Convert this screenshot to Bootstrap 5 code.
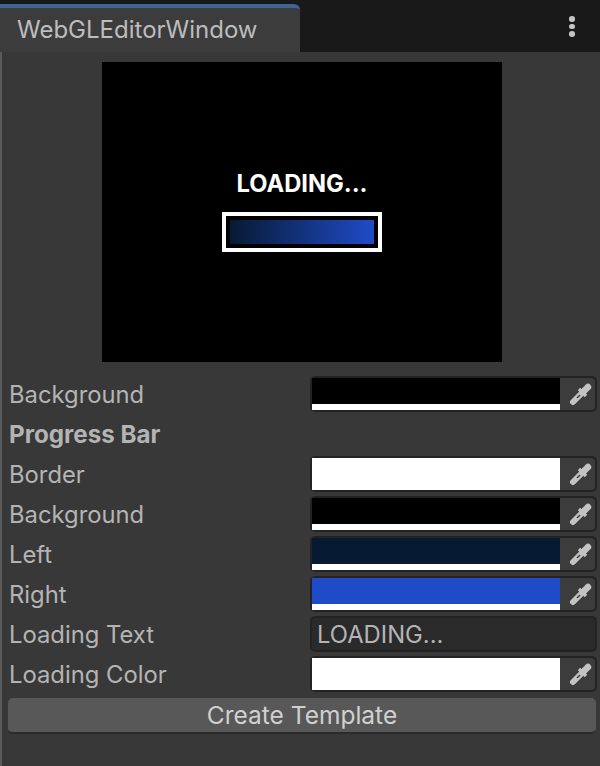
<!DOCTYPE html>
<html lang="en">
<head>
    <meta charset="UTF-8">
    <meta name="viewport" content="width=device-width, initial-scale=1.0">
    <title>WebGLEditorWindow</title>
    <link href="https://cdn.jsdelivr.net/npm/bootstrap@5.3.0/dist/css/bootstrap.min.css" rel="stylesheet">
    <style>
        html, body { height: 100%; }
        body { background: #383838; color: #b4b4b4; font-family: Inter, "Liberation Sans", sans-serif; font-size: 23.8px; line-height: 1; overflow: hidden; }
        .tab-strip { height: 52px; padding-top: 4px; background: #191919; }
        .editor-tab { width: 300px; height: 48px; padding: 10px 0 0 17px; background: #3c3c3c; border-top: 4px solid #3e6595; border-top-right-radius: 6px; color: #bdbdbd; font-size: 24px; }
        .menu-dots { width: 6px; margin: 12px 25px 0 0; gap: 2px; }
        .menu-dots span { width: 5.5px; height: 5.5px; background: #c4c4c4; border-radius: 50%; }
        .window-body { height: 714px; padding: 10px 3px 0 6px; border-left: 2px solid #5a5a5a; }
        .preview-box { width: 400px; height: 300px; margin-left: 94px; background: #000; }
        .preview-title { color: #fff; font-weight: 700; font-size: 23.7px; margin-bottom: 17px; }
        .loading-frame { width: 160px; height: 40px; padding: 4px; border: 4px solid #fff; }
        .loading-fill { height: 100%; background: linear-gradient(90deg, #071a33, #1f4bc8); }
        .prop-list { margin-top: 14px; }
        .prop-row { height: 36px; }
        .prop-label { width: 302px; flex: none; padding: 2px 0 0 1px; }
        .bold-label { font-weight: 700; font-size: 24.2px; }
        .color-field { width: 287px; padding: 2px; background: #232323; border-radius: 5px; }
        .swatch { width: 248px; height: 32px; border-bottom: 6px solid #fff; }
        .swatch-black { background: #000; }
        .swatch-white { background: #fff; }
        .swatch-navy { background: #071a33; }
        .swatch-blue { background: #1f4bc8; }
        .picker-btn { padding-left: 7px; background: #3c3c3c; border-radius: 0 4px 4px 0; }
        .text-field { width: 287px; padding: 2px 5px 0; background: #2a2a2a; border: 2px solid #232323; border-radius: 5px; }
        .create-btn { width: 588px; height: 36px; margin-top: 6px; padding: 0; background: #585858; border: 0; border-bottom: 2px solid #2a2a2a; border-radius: 5px; color: #d0d0d0; font-size: 24.5px; line-height: 1; }
        .create-btn:hover { background: #585858; color: #d0d0d0; }
    </style>
</head>
<body>
<svg class="d-none">
    <symbol id="dropper" viewBox="0 0 24 24">
        <path d="M4 20 L12 12" stroke="#c4c4c4" stroke-width="6" stroke-linecap="round"/>
        <path d="M8 16 L11 13" stroke="#3c3c3c" stroke-width="1.5"/>
        <path d="M10 7 L17 14" stroke="#c4c4c4" stroke-width="3.4"/>
        <path d="M14 10 L19 5" stroke="#c4c4c4" stroke-width="6.5" stroke-linecap="round"/>
    </symbol>
</svg>

<div class="tab-strip d-flex justify-content-between">
    <div class="editor-tab">WebGLEditorWindow</div>
    <div class="menu-dots d-flex flex-column align-items-center">
        <span></span><span></span><span></span>
    </div>
</div>

<div class="window-body">
    <div class="preview-box d-flex flex-column align-items-center justify-content-center">
        <div class="preview-title">LOADING...</div>
        <div class="loading-frame"><div class="loading-fill"></div></div>
    </div>

    <div class="prop-list d-flex flex-column gap-1">
        <div class="prop-row d-flex align-items-center">
            <div class="prop-label">Background</div>
            <div class="color-field d-flex">
                <div class="swatch swatch-black"></div>
                <div class="picker-btn flex-grow-1 d-flex align-items-center justify-content-center"><svg width="24" height="24"><use href="#dropper"/></svg></div>
            </div>
        </div>
        <div class="prop-row d-flex align-items-center">
            <div class="prop-label bold-label">Progress Bar</div>
        </div>
        <div class="prop-row d-flex align-items-center">
            <div class="prop-label">Border</div>
            <div class="color-field d-flex">
                <div class="swatch swatch-white"></div>
                <div class="picker-btn flex-grow-1 d-flex align-items-center justify-content-center"><svg width="24" height="24"><use href="#dropper"/></svg></div>
            </div>
        </div>
        <div class="prop-row d-flex align-items-center">
            <div class="prop-label">Background</div>
            <div class="color-field d-flex">
                <div class="swatch swatch-black"></div>
                <div class="picker-btn flex-grow-1 d-flex align-items-center justify-content-center"><svg width="24" height="24"><use href="#dropper"/></svg></div>
            </div>
        </div>
        <div class="prop-row d-flex align-items-center">
            <div class="prop-label">Left</div>
            <div class="color-field d-flex">
                <div class="swatch swatch-navy"></div>
                <div class="picker-btn flex-grow-1 d-flex align-items-center justify-content-center"><svg width="24" height="24"><use href="#dropper"/></svg></div>
            </div>
        </div>
        <div class="prop-row d-flex align-items-center">
            <div class="prop-label">Right</div>
            <div class="color-field d-flex">
                <div class="swatch swatch-blue"></div>
                <div class="picker-btn flex-grow-1 d-flex align-items-center justify-content-center"><svg width="24" height="24"><use href="#dropper"/></svg></div>
            </div>
        </div>
        <div class="prop-row d-flex align-items-center">
            <div class="prop-label">Loading Text</div>
            <div class="text-field h-100 d-flex align-items-center">LOADING...</div>
        </div>
        <div class="prop-row d-flex align-items-center">
            <div class="prop-label">Loading Color</div>
            <div class="color-field d-flex">
                <div class="swatch swatch-white"></div>
                <div class="picker-btn flex-grow-1 d-flex align-items-center justify-content-center"><svg width="24" height="24"><use href="#dropper"/></svg></div>
            </div>
        </div>
    </div>

    <button type="button" class="btn create-btn">Create Template</button>
</div>

<script src="https://cdn.jsdelivr.net/npm/bootstrap@5.3.0/dist/js/bootstrap.bundle.min.js"></script>
</body>
</html>
